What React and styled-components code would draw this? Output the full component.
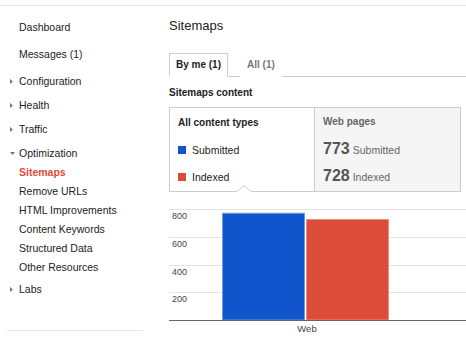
import React from "react";
import styled, { createGlobalStyle } from "styled-components";

const GlobalStyle = createGlobalStyle`
  html, body {
    margin: 0;
    padding: 0;
    background: #fff;
  }
  body {
    font-family: "Liberation Sans", Arial, sans-serif;
    color: #222;
  }
`;

const Page = styled.div`
  width: 466px;
  height: 338px;
  overflow: hidden;
  padding-top: 5px;
  box-sizing: border-box;
  display: flex;
  flex-direction: column;
`;

const Shell = styled.div`
  flex: 1;
  display: flex;
  border-top: 1px solid #e5e5e5;
`;

const Sidebar = styled.nav`
  width: 160px;
  flex-shrink: 0;
  padding: 7px 0 0 10px;
  box-sizing: border-box;
`;

const NavRow = styled.div`
  display: flex;
  align-items: center;
  height: ${({ $h }) => $h}px;
  font-size: 10.5px;
  color: ${({ $active }) => ($active ? "#dd4b39" : "#222")};
  font-weight: ${({ $active }) => ($active ? "bold" : "normal")};
  white-space: nowrap;
`;

const Caret = styled.span`
  width: 9px;
  flex-shrink: 0;
  display: flex;
  align-items: center;
`;

const Groups = styled.div`
  padding-top: 2px;
`;

const SubList = styled.div`
  margin: -3px 0 1px;
`;

const SideRule = styled.div`
  margin: 29px 0 0 -3px;
  width: 136px;
  border-top: 1px solid #e5e5e5;
`;

const Main = styled.main`
  flex: 1;
  padding: 12px 0 0 9px;
  min-width: 0;
`;

const Title = styled.h1`
  margin: 0;
  font-size: 13px;
  line-height: 15px;
  font-weight: normal;
  color: #222;
`;

const TabBar = styled.div`
  margin-top: 20px;
  height: 23px;
  display: flex;
  align-items: flex-end;
  gap: 12px;
  border-bottom: 1px solid #ccc;
`;

const Tab = styled.div`
  height: 24px;
  box-sizing: border-box;
  margin-bottom: -1px;
  padding: 0 6px;
  line-height: 22px;
  font-size: 10px;
  font-weight: bold;
  color: ${({ $active }) => ($active ? "#222" : "#777")};
  border: 1px solid ${({ $active }) => ($active ? "#ccc" : "transparent")};
  border-bottom-color: ${({ $active }) => ($active ? "#fff" : "transparent")};
  background: #fff;
`;

const SectionLabel = styled.div`
  margin-top: 10px;
  font-size: 10px;
  line-height: 12px;
  font-weight: bold;
`;

const Card = styled.div`
  position: relative;
  margin-top: 8px;
  width: 292px;
  height: 85px;
  box-sizing: border-box;
  display: flex;
  border: 1px solid #ccc;
`;

const Pane = styled.div`
  width: 145px;
  box-sizing: border-box;
  padding: ${({ $stats }) => ($stats ? "0 0 0 8px" : "1px 0 0 8px")};
  background: ${({ $stats }) => ($stats ? "#f5f5f5" : "#fff")};
  border-right: ${({ $stats }) => ($stats ? "none" : "1px solid #ccc")};
`;

const PaneTitle = styled.div`
  height: 27px;
  display: flex;
  align-items: center;
  font-size: 10px;
  font-weight: bold;
  color: ${({ $muted }) => ($muted ? "#666" : "#222")};
`;

const LegendRow = styled.div`
  height: 27px;
  display: flex;
  align-items: center;
  gap: 6px;
  font-size: 10.5px;
`;

const Swatch = styled.span`
  width: 8px;
  height: 8px;
  background: ${({ $color }) => $color};
`;

const StatRow = styled.div`
  height: 27px;
  display: flex;
  align-items: baseline;
  padding-top: 5px;
  box-sizing: border-box;
  gap: 3px;
  color: #666;
  font-size: 10.5px;
`;

const StatValue = styled.span`
  font-size: 16px;
  font-weight: bold;
  color: #555;
`;

const Notch = styled.svg`
  position: absolute;
  left: 67px;
  bottom: -1px;
  display: block;
`;

const Chart = styled.svg`
  display: block;
  margin-top: 8px;
  overflow: visible;
`;

const RightTri = () => (
  <svg width="3" height="5" viewBox="0 0 3 5">
    <polygon points="0,0 3,2.5 0,5" fill="#777" />
  </svg>
);

const DownTri = () => (
  <svg width="5" height="3" viewBox="0 0 5 3">
    <polygon points="0,0 5,0 2.5,3" fill="#777" />
  </svg>
);

const groups = [
  { label: "Configuration" },
  { label: "Health" },
  { label: "Traffic" },
  {
    label: "Optimization",
    open: true,
    items: [
      "Sitemaps",
      "Remove URLs",
      "HTML Improvements",
      "Content Keywords",
      "Structured Data",
      "Other Resources",
    ],
  },
  { label: "Labs" },
];

const series = [
  { name: "Submitted", value: 773, color: "#1155cc", edge: "#6f9be3" },
  { name: "Indexed", value: 728, color: "#dd4b39", edge: "#ee8e82" },
];

const BarChart = () => {
  const base = 120;
  const top = 9;
  const max = 800;
  const scale = (base - top) / max;
  const ticks = [800, 600, 400, 200];
  return (
    <Chart width="297" height="138">
      {ticks.map((t) => {
        const y = Math.round(base - t * scale);
        return (
          <g key={t}>
            <rect x="0" y={y} width="297" height="1" fill="#e3e3e3" />
            <text
              x="3"
              y={y + 9.5}
              fontSize="9"
              fill="#444"
              fontFamily='"Liberation Sans", Arial, sans-serif'
            >
              {t}
            </text>
          </g>
        );
      })}
      {series.map((s, i) => {
        const h = s.value * scale;
        const x = 53 + i * 84;
        return (
          <rect
            key={s.name}
            x={x + 0.5}
            y={base - h + 0.5}
            width="82"
            height={h - 0.5}
            fill={s.color}
            stroke={s.edge}
            strokeWidth="1"
          />
        );
      })}
      <rect x="0" y={base} width="297" height="1" fill="#666" />
      <text
        x="138"
        y="131.5"
        fontSize="9.5"
        fill="#444"
        textAnchor="middle"
        fontFamily='"Liberation Sans", Arial, sans-serif'
      >
        Web
      </text>
    </Chart>
  );
};

export default function App() {
  return (
    <>
      <GlobalStyle />
      <Page>
        <Shell>
          <Sidebar>
            <NavRow $h={27}>
              <Caret />
              Dashboard
            </NavRow>
            <NavRow $h={27}>
              <Caret />
              Messages (1)
            </NavRow>
            <Groups>
              {groups.map((g) => (
                <React.Fragment key={g.label}>
                  <NavRow $h={24}>
                    <Caret>{g.open ? <DownTri /> : <RightTri />}</Caret>
                    {g.label}
                  </NavRow>
                  {g.open && (
                    <SubList>
                      {g.items.map((item) => (
                        <NavRow key={item} $h={19} $active={item === "Sitemaps"}>
                          <Caret />
                          {item}
                        </NavRow>
                      ))}
                    </SubList>
                  )}
                </React.Fragment>
              ))}
            </Groups>
            <SideRule />
          </Sidebar>
          <Main>
            <Title>Sitemaps</Title>
            <TabBar>
              <Tab $active>By me (1)</Tab>
              <Tab>All (1)</Tab>
            </TabBar>
            <SectionLabel>Sitemaps content</SectionLabel>
            <Card>
              <Pane>
                <PaneTitle>All content types</PaneTitle>
                {series.map((s) => (
                  <LegendRow key={s.name}>
                    <Swatch $color={s.color} />
                    {s.name}
                  </LegendRow>
                ))}
              </Pane>
              <Pane $stats>
                <PaneTitle $muted>Web pages</PaneTitle>
                {series.map((s) => (
                  <StatRow key={s.name}>
                    <StatValue>{s.value}</StatValue>
                    {s.name}
                  </StatRow>
                ))}
              </Pane>
              <Notch width="14" height="7" viewBox="0 0 14 7">
                <polygon points="0,7 7,0.5 14,7" fill="#fff" />
                <polyline
                  points="0,6.5 7,0.5 14,6.5"
                  fill="none"
                  stroke="#ccc"
                  strokeWidth="1"
                />
              </Notch>
            </Card>
            <BarChart />
          </Main>
        </Shell>
      </Page>
    </>
  );
}
